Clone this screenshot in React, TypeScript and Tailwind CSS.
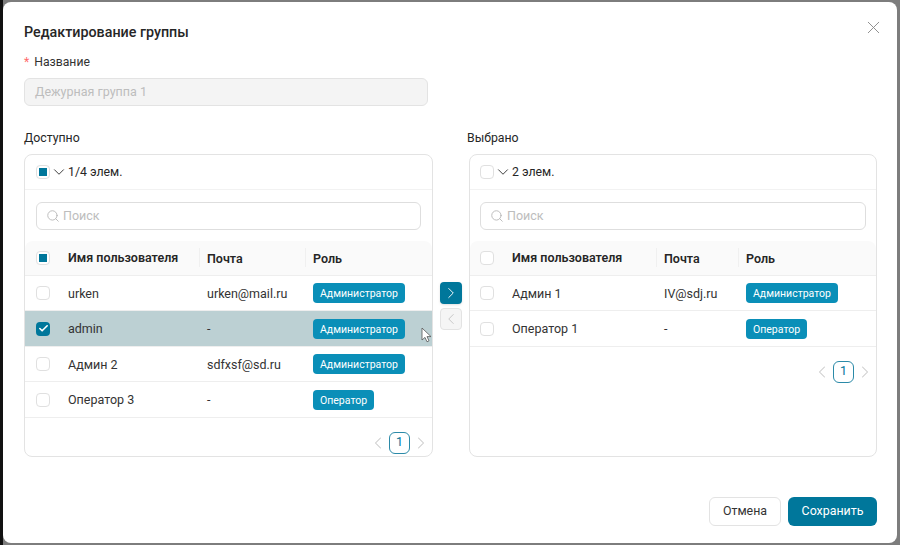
import { Search, X, ChevronDown, ChevronLeft, ChevronRight, Check } from "lucide-react";

type Row = { name: string; mail: string; role: string; checked?: boolean };

const availableRows: Row[] = [
  { name: "urken", mail: "urken@mail.ru", role: "Администратор" },
  { name: "admin", mail: "-", role: "Администратор", checked: true },
  { name: "Админ 2", mail: "sdfxsf@sd.ru", role: "Администратор" },
  { name: "Оператор 3", mail: "-", role: "Оператор" },
];

const selectedRows: Row[] = [
  { name: "Админ 1", mail: "IV@sdj.ru", role: "Администратор" },
  { name: "Оператор 1", mail: "-", role: "Оператор" },
];

function Box({ state }: { state?: "checked" | "partial" }) {
  if (state === "checked") {
    return (
      <span className="flex w-[14px] h-[14px] items-center justify-center rounded-[4px] bg-[#00779b]">
        <Check size={11} strokeWidth={3.5} className="text-white" />
      </span>
    );
  }
  return (
    <span className="flex w-[14px] h-[14px] items-center justify-center rounded-[4px] border border-[#e0e0e0] bg-white">
      {state === "partial" && <span className="w-[8px] h-[8px] bg-[#00779b]" />}
    </span>
  );
}

function Panel({
  title,
  count,
  partial,
  rows,
  cols,
  width,
  titleClass,
  pad,
  cellPad,
}: {
  title: string;
  count: string;
  partial?: boolean;
  rows: Row[];
  cols: string;
  width: string;
  titleClass?: string;
  pad: string;
  cellPad: string;
}) {
  return (
    <div className={`flex flex-col ${width}`}>
      <div className={`h-[25px] text-[12.3px] leading-[19px] text-[#262626] ${titleClass ?? ""}`}>{title}</div>
      <div className="flex flex-col h-[303px] rounded-[8px] border border-[#e3e3e3] bg-white">
        <div className={`flex items-center h-[35px] shrink-0 ${cellPad} border-b border-[#f2f2f2] text-[12.3px] text-[#262626]`}>
          <Box state={partial ? "partial" : undefined} />
          <ChevronDown size={18} strokeWidth={1.25} className="text-[#333]" />
          <span>{count}</span>
        </div>
        <div className={`${pad} pt-[12px] pb-[11px] shrink-0`}>
          <div className="flex items-center h-[28px] rounded-[6px] border border-[#dedede] pl-[9px] text-[12.5px] text-[#bdbdbd]">
            <Search size={14} strokeWidth={1.5} className="text-[#b5b5b5]" />
            <span className="ml-[3px]">Поиск</span>
          </div>
        </div>
        <div className={`grid ${cols} items-center h-[34.5px] shrink-0 rounded-t-[8px] bg-[#fafafa] border-b border-[#eeeeee] text-[12.5px] font-semibold text-[#262626]`}>
          <div className={cellPad}>
            <Box state={partial ? "partial" : undefined} />
          </div>
          <div className="pl-[8px] pt-[1px]">Имя пользователя</div>
          <div className="pl-[7px] h-[19px] leading-[21px] border-l border-[#f0f0f0]">Почта</div>
          <div className="pl-[7px] h-[19px] leading-[21px] border-l border-[#f0f0f0]">Роль</div>
        </div>
        {rows.map((row) => (
          <div
            key={row.name}
            className={`grid ${cols} items-center h-[35.5px] pt-[1px] shrink-0 border-b border-[#eeeeee] text-[12.5px] text-[#333] ${row.checked ? "bg-[#bcd0d3]" : "bg-white"}`}
          >
            <div className={cellPad}>
              <Box state={row.checked ? "checked" : undefined} />
            </div>
            <div className="pl-[8px] pt-[2px]">{row.name}</div>
            <div className="pl-[8px] pt-[2px]">{row.mail}</div>
            <div className="pl-[8px]">
              <span className="inline-block h-[20px] px-[7px] rounded-[4px] bg-[#0a8fb8] text-[10.5px] leading-[21px] text-white">
                {row.role}
              </span>
            </div>
          </div>
        ))}
        <div className="flex items-center justify-end gap-[1px] pt-[14px] pr-[1px] text-[#c9c9c9]">
          <ChevronLeft size={20} strokeWidth={1.25} />
          <span className="flex w-[21px] h-[22px] items-center justify-center rounded-[6px] border border-[#2b8aa8] text-[12.5px] text-[#00779b]">
            1
          </span>
          <ChevronRight size={20} strokeWidth={1.25} />
        </div>
      </div>
    </div>
  );
}

export default function App() {
  return (
    <div className="w-[900px] h-[545px] overflow-hidden bg-[#7d7d7d] border-l-[3px] border-[#111] pt-[2px] pr-[3px] pb-[2px] font-['Roboto',sans-serif]">
      <div className="relative flex flex-col h-full rounded-[8px] bg-white pl-[21px] pr-[20px]">
        <div className="flex items-center justify-between h-[62px] shrink-0">
          <h1 className="text-[14.3px] font-medium text-[#262626]">Редактирование группы</h1>
          <X size={21} strokeWidth={1.1} className="text-[#8c8c8c] -mr-[7px] -mt-[11px]" />
        </div>
        <div className="h-[16px] text-[12.2px] leading-[16px] text-[#333] -mt-[10px] shrink-0">
          <span className="text-[#ff6b6b] mr-[5px]">*</span>Название
        </div>
        <div className="flex items-center w-[404px] h-[28px] mt-[8px] shrink-0 rounded-[6px] border border-[#e3e3e3] bg-[#f4f4f4] pl-[10px] text-[12.5px] text-[#bdbdbd]">
          Дежурная группа 1
        </div>
        <div className="flex mt-[23px] shrink-0">
          <Panel
            title="Доступно"
            count="1/4 элем."
            partial
            rows={availableRows}
            cols="grid-cols-[35px_139px_106px_1fr]"
            width="w-[409px]"
            pad="px-[11px]"
            cellPad="pl-[11px]"
          />
          <div className="flex flex-col w-[36px] pt-[153px] pl-[7px] gap-[4px]">
            <button className="flex w-[22px] h-[22px] items-center justify-center rounded-[4px] bg-[#00779b] text-white shadow-sm">
              <ChevronRight size={18} strokeWidth={1.25} />
            </button>
            <button className="flex w-[22px] h-[22px] items-center justify-center rounded-[4px] border border-[#e3e3e3] bg-[#f5f5f5] text-[#c4c4c4]">
              <ChevronLeft size={18} strokeWidth={1.25} />
            </button>
          </div>
          <Panel
            title="Выбрано"
            count="2 элем."
            rows={selectedRows}
            cols="grid-cols-[34px_152px_82px_1fr]"
            width="w-[408px]"
            titleClass="-ml-[2px]"
            pad="pl-[10px] pr-[10px]"
            cellPad="pl-[10px]"
          />
        </div>
        <div className="flex justify-end gap-[7px] mt-[40px] shrink-0">
          <button className="w-[72px] h-[29px] rounded-[6px] border border-[#e3e3e3] bg-white text-[12.4px] text-[#333]">
            Отмена
          </button>
          <button className="w-[89px] h-[29px] rounded-[6px] bg-[#00779b] text-[12.4px] text-white">
            Сохранить
          </button>
        </div>
        {/* mouse cursor over the table */}
        <svg className="absolute left-[418px] top-[325px]" width="12" height="17" viewBox="0 0 12 17">
          <path d="M1 1v12l3-2.6 2 4.4 2-1-2-4.2h4z" fill="#fff" stroke="#555" strokeWidth="0.8" />
        </svg>
      </div>
    </div>
  );
}
